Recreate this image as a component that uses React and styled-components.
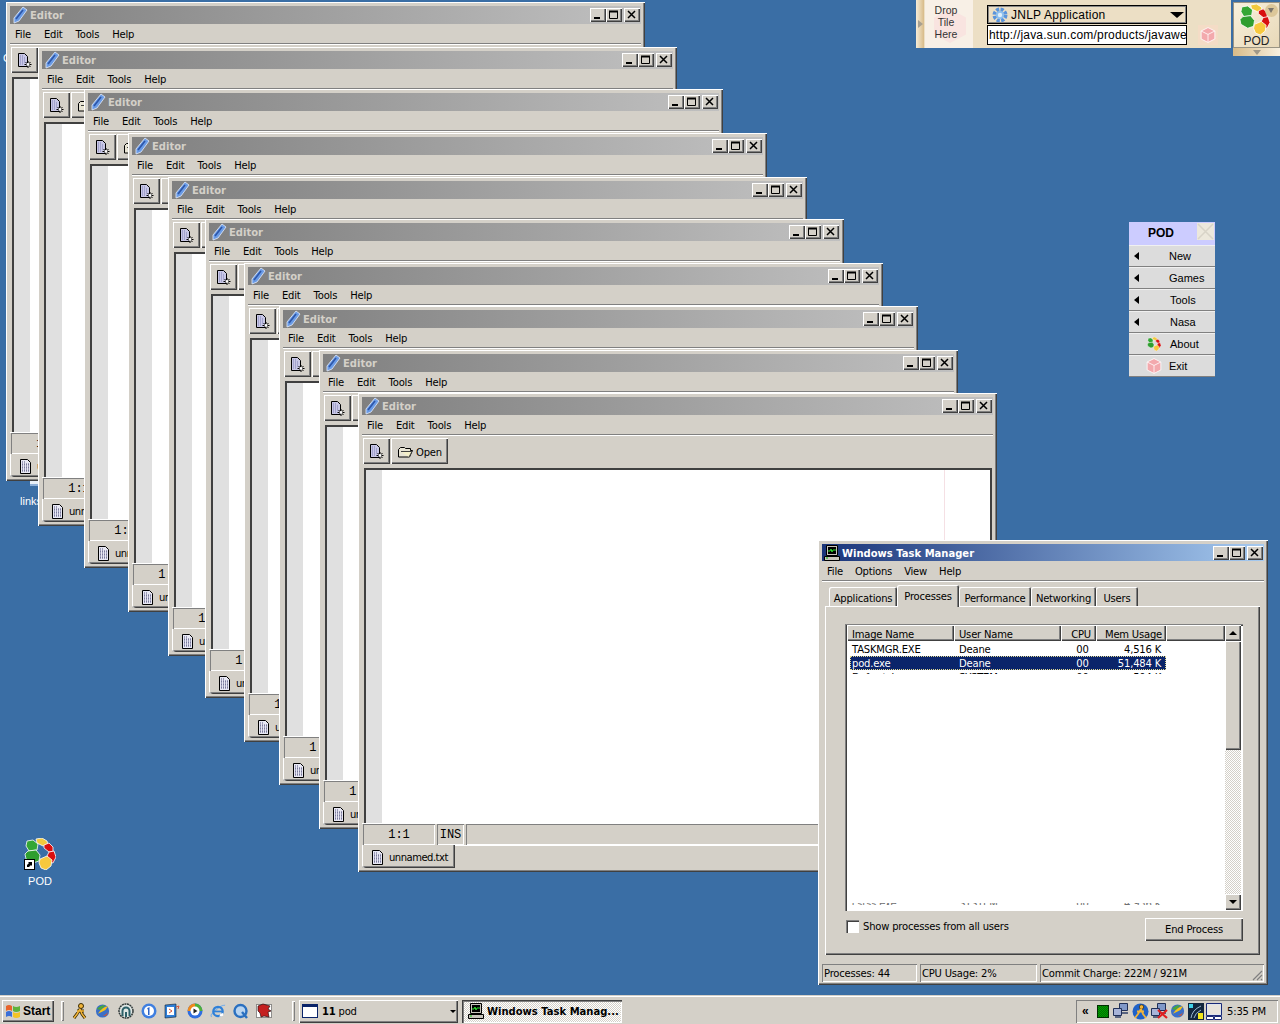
import styled, { createGlobalStyle } from "styled-components";

const GlobalStyle = createGlobalStyle`
  html, body {
    margin: 0;
    padding: 0;
    background: #3a6ea5;
  }
  * {
    box-sizing: border-box;
  }
`;

const UI_FONT = `"DejaVu Sans", sans-serif`;
const FACE = "#d4d0c8";

const raised = `box-shadow: inset 1px 1px 0 #fff, inset -1px -1px 0 #404040, inset -2px -2px 0 #808080;`;
const sunken = `box-shadow: inset 1px 1px 0 #808080, inset -1px -1px 0 #fff;`;

const EDITORS = [
  [6, 2], [38, 47], [84, 89], [128, 133], [168, 177],
  [205, 219], [244, 263], [279, 306], [319, 350], [358, 393],
];

const PROCESSES = [
  { name: "TASKMGR.EXE", user: "Deane", cpu: "00", mem: "4,516 K" },
  { name: "pod.exe", user: "Deane", cpu: "00", mem: "51,484 K", selected: true },
];

// icons

const PenIcon = () => (
  <svg width="16" height="18" viewBox="0 0 16 18">
    <path d="M11 1l4 3-8 11-5 2 0-5z" fill="#6a9be6" stroke="#e4ecfa" strokeWidth="0.8" />
    <path d="M4 13l7-9" stroke="#2c55a8" strokeWidth="1.600" />
  </svg>
);

const NewDocIcon = () => (
  <svg width="15" height="16" viewBox="0 0 15 16">
    <path d="M1.500.5h6l3 3v10h-9z" fill="#c9c8e6" stroke="#000" />
    <path d="M3 3h3M3 5h6M3 7h6M3 9h6M3 11h4" stroke="#7f7fb4" strokeDasharray="1 1" />
    <path d="M11 8v7M7.500 11.500h7M8.500 9l5 5M13.500 9l-5 5" stroke="#000" />
    <circle cx="11" cy="11.500" r="1.400" fill="#fff" />
  </svg>
);

const FolderIcon = () => (
  <svg width="15" height="12" viewBox="0 0 15 12">
    <path d="M.5 3.500l2-2h4l1 1h5v2h2l-3 6.500h-11z" fill="#e8e4d4" stroke="#000" />
    <path d="M3 5.500h11l-3 5.500" fill="#f4efc8" stroke="#404040" />
  </svg>
);

const DocIcon = () => (
  <svg width="13" height="15" viewBox="0 0 13 15">
    <path d="M1.500.5h7l3 3v11h-10z" fill="#e8e8f4" stroke="#000" />
    <path d="M3 3h4M3 5h7M3 6h7M3 8h7M3 9h7M3 11h7M3 12h7" stroke="#55557e" strokeDasharray="1 1" />
  </svg>
);

const MonitorIcon = () => (
  <svg width="16" height="16" viewBox="0 0 16 16">
    <path d="M2.500.5h11v10h-11z" fill="#c8c4bc" stroke="#000" />
    <path d="M4 2h8v7h-8z" fill="#000" />
    <path d="M4 6h2l1-2 1 3 1-2h3" stroke="#30e030" fill="none" />
    <path d="M.5 11.500h15v4h-15z" fill="#c8c4bc" stroke="#000" />
    <path d="M2 13h2" stroke="#00c000" />
  </svg>
);

const PodLogo = ({ size = 32 }) => (
  <svg width={size} height={size} viewBox="0 0 32 32">
    <g stroke="#fff" strokeWidth="0.8">
      <path d="M3 3l6-1 5 4-1 6-8 1-3-5z" fill="#34a634" />
      <path d="M4 13l8-1 4 5-1 6-6 2-7-4-1-5z" fill="#2f9e2f" />
      <path d="M12 1l6-1 5 3 1 4-5 1-6-3z" fill="#f2c93c" />
      <path d="M20 7l5-2 4 4 0 5-4 0-5-4z" fill="#d80f0f" />
      <path d="M25 14l5-1 2 6-3 6-4-1-2-6z" fill="#d80f0f" />
      <path d="M16 21l7-3 5 4-1 6-5 4-5-2-2-5z" fill="#f7c83e" />
    </g>
  </svg>
);

const Cube = ({ size = 16 }) => (
  <svg width={size} height={size} viewBox="0 0 14 14">
    <path d="M7 .5l6 3v7l-6 3-6-3v-7z" fill="#f3a9ad" stroke="#fff" strokeWidth="0.7" />
    <path d="M1 3.500l6 3 6-3M7 6.500v7" fill="none" stroke="#fff" strokeWidth="0.7" />
  </svg>
);

const Shortcut = () => (
  <svg width="11" height="11" viewBox="0 0 11 11">
    <path d="M0 0h11v11h-11z" fill="#000" />
    <path d="M1 1h9v9h-9z" fill="#fff" />
    <path d="M3 8l0-2 2-2-1-1h4v4l-1-1-2 2z" fill="#000" />
  </svg>
);

const WindowsFlag = () => (
  <svg width="16" height="15" viewBox="0 0 16 15">
    <path d="M1 2q3-2 6 0v5q-3-2-6 0z" fill="#e8632a" />
    <path d="M8 2q3 2 7 0v5q-4 2-7 0z" fill="#5fb33b" />
    <path d="M1 8q3-2 6 0v5q-3-2-6 0z" fill="#3a6fd8" />
    <path d="M8 8q3 2 7 0v5q-4 2-7 0z" fill="#f3c324" />
  </svg>
);

const Aim = () => (
  <svg width="16" height="17" viewBox="0 0 16 17">
    <circle cx="9" cy="3" r="2.500" fill="#f2b53a" stroke="#3a2a00" />
    <path d="M8 6l-3 5-3 4M8 6l2 5 3 4M5 8l7 0" fill="none" stroke="#3a2a00" strokeWidth="3" />
    <path d="M8 6l-3 5-3 4M8 6l2 5 3 4M5 8l7 0" fill="none" stroke="#f2b53a" strokeWidth="1.500" />
  </svg>
);

const OrbitGlobe = () => (
  <svg width="16" height="16" viewBox="0 0 17 16">
    <circle cx="8" cy="8" r="7" fill="#3a6fc8" />
    <path d="M3 11q5-8 11-8l-3 4q-4 2-8 4z" fill="#f4c21c" />
    <path d="M2 6q4-5 9-4l-5 5z" fill="#4aa83a" />
    <path d="M4 13q6 1 10-4l-2 4z" fill="#d8542a" />
  </svg>
);

const GearGlobe = () => (
  <svg width="16" height="16" viewBox="0 0 16 16">
    <circle cx="8" cy="8" r="5.500" fill="none" stroke="#5a94dc" strokeWidth="4" strokeDasharray="3 1.300" />
    <circle cx="8" cy="8" r="4" fill="#8ec0ee" />
    <circle cx="8" cy="8" r="2.200" fill="#dfeefa" />
  </svg>
);

const HeadsetRing = () => (
  <svg width="16" height="16" viewBox="0 0 16 16">
    <circle cx="8" cy="8" r="7" fill="#dfe6e4" stroke="#303838" strokeWidth="1.500" strokeDasharray="2 0.6" />
    <path d="M4.500 13v-5a3.500 3.500 0 0 1 7 0v5" fill="none" stroke="#2c6068" strokeWidth="2" />
    <path d="M7 9h2v5h-2z" fill="#2c6068" />
  </svg>
);

const OneBadge = () => (
  <svg width="16" height="16" viewBox="0 0 16 16">
    <circle cx="8" cy="8" r="7.500" fill="#3f7fe0" />
    <circle cx="8" cy="8" r="5" fill="#fff" />
    <path d="M6.500 5l2-1v8h-1.500v-6l-1 .5z" fill="#2a62c8" />
  </svg>
);

const OutlookBox = () => (
  <svg width="16" height="16" viewBox="0 0 16 16">
    <path d="M1 2l11-1v13l-11 1z" fill="#2f7fd8" stroke="#123" strokeWidth="0.6" />
    <path d="M3 4h7v8h-7z" fill="#fff" />
    <path d="M5 6l3 2-3 2M12 4l3-1-1 3" fill="none" stroke="#d4543a" />
  </svg>
);

const MediaPlayer = () => (
  <svg width="16" height="16" viewBox="0 0 16 16">
    <circle cx="8" cy="8" r="7.500" fill="#2f6ee0" />
    <path d="M8 .5a7.500 7.500 0 0 1 7.500 7.500h-7.500z" fill="#4fb038" />
    <path d="M.5 8a7.500 7.500 0 0 1 7.500-7.500v7.500z" fill="#f08a1c" />
    <circle cx="8" cy="8" r="4.500" fill="#fff" />
    <path d="M6.500 5.500l4 2.500-4 2.500z" fill="#222" />
  </svg>
);

const IeIcon = () => (
  <svg width="16" height="16" viewBox="0 0 17 16">
    <path d="M2 14q-3-1 4-7t10-5" fill="none" stroke="#7ab0e8" strokeWidth="1.200" />
    <circle cx="8.500" cy="8.500" r="5" fill="none" stroke="#2f80d8" strokeWidth="2.400" />
    <path d="M4 8.500h9" stroke="#2f80d8" strokeWidth="1.800" />
    <path d="M11 11l3-1 0 3-4 1z" fill="#fff" />
  </svg>
);

const QuickTime = () => (
  <svg width="16" height="16" viewBox="0 0 16 16">
    <circle cx="7.500" cy="8" r="6" fill="#b8d4f0" stroke="#2a70c0" strokeWidth="2.400" />
    <path d="M9 9l5 6" stroke="#2a70c0" strokeWidth="2.400" />
  </svg>
);

const DragonBox = () => (
  <svg width="16" height="16" viewBox="0 0 16 16">
    <path d="M.5 1.500h15v13h-15z" fill="#fff" stroke="#333" strokeDasharray="1 1" />
    <path d="M2 3l5-2 7 2-2 3 3 2-3 1 1 5-5-1-3 1-1-4-2-2z" fill="#c42020" stroke="#301010" strokeWidth="0.7" />
  </svg>
);

const NetPair = ({ cross }) => (
  <svg width="17" height="16" viewBox="0 0 17 16">
    <path d="M6.500.5h8v7h-8z" fill="#8098c8" stroke="#203058" />
    <path d="M.5 5.500h8v7h-8z" fill="#a8b4d8" stroke="#203058" />
    <path d="M2 14h6M9 10h6" stroke="#304068" strokeWidth="1.500" />
    {cross && <path d="M7 7l9 8M16 7l-9 8" stroke="#e02020" strokeWidth="2.200" />}
  </svg>
);

const AimBadge = () => (
  <svg width="17" height="17" viewBox="0 0 17 17">
    <circle cx="8.500" cy="8.500" r="8" fill="#1f62c8" />
    <circle cx="9.500" cy="4" r="2.200" fill="#f2b53a" stroke="#221a00" strokeWidth="0.600" />
    <path d="M9 6l-3 5-3 4M9 6l2 5 3 4M5 8.500l7 0" fill="none" stroke="#f2b53a" strokeWidth="1.800" />
  </svg>
);

const SignalBox = () => (
  <svg width="16" height="17" viewBox="0 0 16 17">
    <path d="M0 0h16v17h-16z" fill="#12263e" />
    <path d="M1 1h4v4h-4z" fill="#40d0e8" />
    <path d="M3 15q1-8 10-12M6 15q1-5 7-8" fill="none" stroke="#9ab8d0" />
    <path d="M10 10h5v6h-5z" fill="#f2e61c" />
  </svg>
);

const LaptopBox = () => (
  <svg width="16" height="17" viewBox="0 0 16 17">
    <path d="M.5.5h15v12h-15z" fill="#dfe4ec" stroke="#1a2a78" />
    <path d="M2 2h12v9h-12z" fill="#e8e4dc" />
    <path d="M.5 13.500h7v3h-7zM8.500 13.500h7v3h-7z" fill="#fff" stroke="#1a2a78" />
  </svg>
);

// page structure

const Screen = styled.div`
  width: 1280px;
  height: 1024px;
  display: flex;
  flex-direction: column;
  overflow: hidden;
  background: #3a6ea5;
  font-family: ${UI_FONT};
  font-size: 10px;
  letter-spacing: -0.2px;
  color: #000;
`;

const Workspace = styled.div`
  position: relative;
  flex: 1;
  overflow: hidden;
`;

const DesktopIcon = styled.div`
  position: absolute;
  left: ${(p) => p.$x}px;
  top: ${(p) => p.$y}px;
  width: 60px;
  display: flex;
  flex-direction: column;
  align-items: center;
  gap: 5px;
  color: #fff;
  font-size: 11px;
  letter-spacing: 0;
  font-family: "Liberation Sans", sans-serif;
`;

const IconStack = styled.div`
  position: relative;
  height: 32px;
`;

const ShortcutBadge = styled.div`
  position: absolute;
  left: 0;
  bottom: 0;
  line-height: 0;
`;

const HiddenLabel = styled.div`
  position: absolute;
  left: ${(p) => p.$x}px;
  top: ${(p) => p.$y}px;
  color: #fff;
  font-size: 11px;
  letter-spacing: 0;
  font-family: "Liberation Sans", sans-serif;
`;

const HiddenIconEdge = styled.div`
  position: absolute;
  left: 30px;
  top: 481px;
  width: 8px;
  height: 5px;
  background: #e8f0f8;
  border-bottom: 2px solid #8eb0d8;
`;

// editor window

const EditorFrame = styled.div`
  position: absolute;
  left: ${(p) => p.$x}px;
  top: ${(p) => p.$y}px;
  width: 639px;
  height: 479px;
  padding: 4px 4px 3px;
  display: flex;
  flex-direction: column;
  background: ${FACE};
  ${raised}
`;

const TitleBar = styled.div`
  height: 18px;
  flex: none;
  display: flex;
  align-items: center;
  padding: 0 1px 0 2px;
  gap: 2px;
  background: linear-gradient(90deg, #808080, #c0c0c0);
  color: ${FACE};
  font-weight: bold;
  letter-spacing: 0;
  line-height: 0;
`;

const TitleText = styled.span`
  flex: 1;
  padding-top: 2px;
  line-height: 14px;
`;

const CaptionButtons = styled.div`
  display: flex;
  align-items: center;
`;

const CaptionButton = styled.div`
  position: relative;
  width: 16px;
  height: 14px;
  margin-left: ${(p) => (p.$close ? 2 : 0)}px;
  background: ${FACE};
  ${raised}
  svg {
    position: absolute;
    left: 3px;
    top: 2px;
  }
`;

const CaptionGlyph = ({ kind }) => (
  <svg width="9" height="9" viewBox="0 0 9 9">
    {kind === "min" && <path d="M1 7h6v2h-6z" fill="#000" />}
    {kind === "max" && <path d="M.5 1.500h8v7h-8zM0 1h9v1h-9z" fill="none" stroke="#000" />}
    {kind === "close" && <path d="M1 1l7 7M8 1l-7 7" stroke="#000" strokeWidth="1.500" />}
  </svg>
);

const MenuBar = styled.div`
  height: 19px;
  flex: none;
  display: flex;
  align-items: center;
  padding: 2px 0 0 1px;
`;

const MenuItem = styled.span`
  padding: 0 6px 0 4px;
  margin-right: ${(p) => p.$gap ?? 3}px;
`;

const Groove = styled.div`
  height: 2px;
  flex: none;
  border-top: 1px solid #808080;
  border-bottom: 1px solid #fff;
`;

const Toolbar = styled.div`
  height: 32px;
  flex: none;
  display: flex;
  align-items: flex-start;
  padding: 2px 1px 0;
  gap: 1px;
`;

const ToolButton = styled.div`
  height: 26px;
  padding: 2px 6px 0 ${(p) => (p.$label ? 7 : 6)}px;
  display: flex;
  align-items: center;
  gap: 3px;
  background: ${FACE};
  ${raised}
`;

const EditorPane = styled.div`
  flex: 1;
  margin: 0 1px 0 2px;
  display: flex;
  border-top: 2px solid #404040;
  border-left: 2px solid #404040;
  border-right: 2px solid #404040;
  background: #fff;
  position: relative;
`;

const Gutter = styled.div`
  width: 16px;
  background: #e0e0e0;
`;

const MarginLine = styled.div`
  position: absolute;
  left: 578px;
  top: 0;
  bottom: 0;
  width: 1px;
  background: #f5e0e4;
`;

const CaretRow = styled.div`
  height: 22px;
  flex: none;
  display: flex;
  gap: 2px;
  padding-left: 1px;
  border-top: 1px solid #fff;
`;

const CaretCell = styled.div`
  display: flex;
  align-items: center;
  justify-content: center;
  width: ${(p) => (p.$width ? `${p.$width}px` : "auto")};
  flex: ${(p) => (p.$width ? "none" : "1")};
  font-family: "Liberation Mono", monospace;
  font-size: 12px;
  letter-spacing: 0;
  ${sunken}
`;

const TabRow = styled.div`
  flex: none;
  height: 24px;
  display: flex;
  align-items: flex-start;
`;

const FileTab = styled.div`
  height: 23px;
  width: 93px;
  padding: 2px 0 0 9px;
  display: flex;
  align-items: center;
  gap: 5px;
  letter-spacing: -0.5px;
  white-space: nowrap;
  background: ${FACE};
  border-radius: 0 0 0 3px;
  box-shadow: inset 1px 0 0 #fff, inset -1px -1px 0 #404040, inset -2px -2px 0 #808080;
`;

const TabFiller = styled.div`
  flex: 1;
  border-top: 1px solid #fff;
`;

const EditorWindow = ({ x, y }) => (
  <EditorFrame $x={x} $y={y}>
    <TitleBar>
      <PenIcon />
      <TitleText>Editor</TitleText>
      <CaptionButtons>
        <CaptionButton><CaptionGlyph kind="min" /></CaptionButton>
        <CaptionButton><CaptionGlyph kind="max" /></CaptionButton>
        <CaptionButton $close><CaptionGlyph kind="close" /></CaptionButton>
      </CaptionButtons>
    </TitleBar>
    <MenuBar>
      <MenuItem>File</MenuItem>
      <MenuItem>Edit</MenuItem>
      <MenuItem>Tools</MenuItem>
      <MenuItem>Help</MenuItem>
    </MenuBar>
    <Groove />
    <Toolbar>
      <ToolButton><NewDocIcon /></ToolButton>
      <ToolButton $label><FolderIcon />Open</ToolButton>
    </Toolbar>
    <EditorPane>
      <Gutter />
      <MarginLine />
    </EditorPane>
    <CaretRow>
      <CaretCell $width={72}>1:1</CaretCell>
      <CaretCell $width={27}>INS</CaretCell>
      <CaretCell />
    </CaretRow>
    <TabRow>
      <FileTab><DocIcon />unnamed.txt</FileTab>
      <TabFiller />
    </TabRow>
  </EditorFrame>
);

// task manager

const TaskFrame = styled.div`
  position: absolute;
  left: 818px;
  top: 540px;
  width: 450px;
  height: 445px;
  padding: 4px 4px 3px;
  display: flex;
  flex-direction: column;
  background: ${FACE};
  ${raised}
`;

const ActiveTitle = styled(TitleBar)`
  height: 17px;
  background: linear-gradient(90deg, #1a357a, #a6caf0);
  color: #fff;
`;

const TaskTabs = styled.div`
  display: flex;
  align-items: flex-end;
  height: 21px;
  flex: none;
  padding-left: 7px;
  margin-top: 3px;
`;

const TaskTab = styled.div`
  height: ${(p) => (p.$active ? 22 : 19)}px;
  width: ${(p) => p.$width}px;
  flex: none;
  display: flex;
  align-items: center;
  justify-content: center;
  padding-top: ${(p) => (p.$active ? 1 : 3)}px;
  padding-bottom: ${(p) => (p.$active ? 1 : 0)}px;
  margin-bottom: ${(p) => (p.$active ? -1 : 0)}px;
  background: ${FACE};
  position: relative;
  z-index: ${(p) => (p.$active ? 2 : 1)};
  border-radius: 2px 2px 0 0;
  box-shadow: inset 1px 1px 0 #fff, inset -1px 0 0 #404040, inset -2px 0 0 #808080;
`;

const TaskPanel = styled.div`
  margin: 0 4px 0 3px;
  height: 349px;
  flex: none;
  padding: 18px 17px 0 20px;
  display: flex;
  flex-direction: column;
  ${raised}
`;

const ProcessList = styled.div`
  height: 287px;
  padding: 1px;
  flex: none;
  display: flex;
  background: #fff;
  box-shadow: inset 1px 1px 0 #808080, inset 2px 2px 0 #404040, inset -1px -1px 0 #fff;
`;

const ListBody = styled.div`
  flex: 1;
  padding-left: 1px;
  display: flex;
  flex-direction: column;
  min-width: 0;
`;

const ListHead = styled.div`
  display: grid;
  grid-template-columns: 107px 107px 35px 70px 1fr;
  height: 16px;
  flex: none;
`;

const HeadCell = styled.div`
  display: flex;
  align-items: center;
  padding: 2px 0 0 5px;
  justify-content: ${(p) => (p.$center ? "center" : "flex-start")};
  background: ${FACE};
  ${raised}
`;

const Rows = styled.div`
  flex: 1;
  padding-top: 1px;
  position: relative;
  overflow: hidden;
`;

const Row = styled.div`
  display: grid;
  grid-template-columns: 107px 107px 35px 67px;
  width: 316px;
  margin-left: 3px;
  height: 14px;
  padding-top: 1px;
  line-height: 14px;
  overflow: hidden;
  color: ${(p) => (p.$selected ? "#fff" : "#000")};
  background: ${(p) => (p.$selected ? "#0a246a" : "transparent")};
  outline: ${(p) => (p.$selected ? "1px dotted #e0d890" : "none")};
  outline-offset: -1px;
`;

const SliverRow = styled(Row)`
  height: 4px;
  ${(p) => p.$bottom && `
    position: absolute;
    left: 0;
    bottom: 5px;
    height: 2px;
    padding-top: 0;
    line-height: 2px;
    color: #707070;
  `}
`;

const Cell = styled.span`
  padding-left: ${(p) => (p.$right ? 0 : 2)}px;
  padding-right: ${(p) => p.$pad ?? 0}px;
  text-align: ${(p) => (p.$right ? "right" : p.$center ? "center" : "left")};
  white-space: nowrap;
`;

const ScrollBar = styled.div`
  width: 16px;
  flex: none;
  margin: 0 1px 0 0;
  display: flex;
  flex-direction: column;
  background: repeating-conic-gradient(#fff 0 25%, ${FACE} 0 50%) 0 0 / 2px 2px;
`;

const ScrollButton = styled.div`
  height: 16px;
  flex: none;
  display: flex;
  align-items: center;
  justify-content: center;
  background: ${FACE};
  ${raised}
`;

const ScrollThumb = styled.div`
  height: 109px;
  flex: none;
  background: ${FACE};
  ${raised}
`;

const ScrollGap = styled.div`
  flex: 1;
`;

const Arrow = styled.div`
  width: 0;
  height: 0;
  border-left: 4px solid transparent;
  border-right: 4px solid transparent;
  ${(p) => (p.$up ? "border-bottom: 4px solid #000;" : "border-top: 4px solid #000;")}
`;

const PanelFooter = styled.div`
  display: flex;
  justify-content: space-between;
  align-items: flex-start;
  margin-top: 7px;
  padding-left: 1px;
`;

const CheckLabel = styled.label`
  display: flex;
  align-items: center;
  gap: 4px;
  height: 16px;
`;

const CheckBox = styled.span`
  width: 13px;
  height: 13px;
  background: #fff;
  box-shadow: inset 1px 1px 0 #808080, inset 2px 2px 0 #404040, inset -1px -1px 0 #fff;
`;

const EndButton = styled.div`
  width: 98px;
  height: 23px;
  display: flex;
  align-items: center;
  justify-content: center;
  background: ${FACE};
  ${raised}
`;

const TaskStatus = styled.div`
  display: flex;
  flex: none;
  gap: 3px;
  height: 18px;
  margin-top: 9px;
`;

const StatusCell = styled.div`
  width: ${(p) => (p.$width ? `${p.$width}px` : "auto")};
  flex: ${(p) => (p.$width ? "none" : "1")};
  display: flex;
  align-items: center;
  padding-left: 2px;
  position: relative;
  ${sunken}
`;

const GripLines = styled.svg`
  position: absolute;
  right: 1px;
  bottom: 1px;
`;

// pod side menu and dock

const PodMenu = styled.div`
  position: absolute;
  left: 1129px;
  top: 222px;
  width: 86px;
  display: flex;
  flex-direction: column;
  font-family: "Liberation Sans", sans-serif;
  font-size: 11px;
  letter-spacing: 0;
`;

const PodHeader = styled.div`
  position: relative;
  height: 23px;
  display: flex;
  align-items: center;
  justify-content: center;
  padding: 0 22px 2px 0;
  background: #ccccff;
  font-weight: bold;
  font-size: 12px;
`;

const PodClose = styled.div`
  position: absolute;
  right: 1px;
  top: 1px;
  width: 17px;
  height: 17px;
  display: flex;
  background: #ece8dc;
`;

const PodItem = styled.div`
  position: relative;
  height: 22px;
  display: flex;
  align-items: center;
  padding-left: ${(p) => p.$indent}px;
  background: #dcdcdc;
  border-top: 1px solid #f0f0f0;
  border-bottom: 1px solid #808080;
`;

const PodIcon = styled.span`
  position: absolute;
  left: ${(p) => p.$x}px;
  top: ${(p) => p.$y}px;
  line-height: 0;
`;

const PodArrow = styled.span`
  position: absolute;
  left: 5px;
  top: 6px;
  width: 0;
  height: 0;
  border-top: 4px solid transparent;
  border-bottom: 4px solid transparent;
  border-right: 5px solid #000;
`;

const Dock = styled.div`
  position: absolute;
  left: 916px;
  top: 0;
  width: 315px;
  height: 48px;
  display: flex;
  background: #ecdfc5;
  font-family: "Liberation Sans", sans-serif;
  font-size: 12px;
  letter-spacing: 0;
`;

const DockHandle = styled.div`
  width: 8px;
  display: flex;
  align-items: center;
  justify-content: center;
  background: linear-gradient(90deg, #f6ecd8, #d8bb88);
  &::before {
    content: "";
    border-top: 4px solid transparent;
    border-bottom: 4px solid transparent;
    border-left: 5px solid #a8a090;
  }
`;

const DropTile = styled.div`
  position: relative;
  width: 48px;
  margin-left: 1px;
  padding: 4px 6px 0 0;
  background: #f8f0e6;
  text-align: center;
  font-size: 10.5px;
  line-height: 12px;
  color: #333;
`;

const DropCube = styled.div`
  position: absolute;
  left: 9px;
  top: 9px;
  width: 32px;
  height: 34px;
  background: #f9e4e0;
  clip-path: polygon(50% 0, 100% 25%, 100% 75%, 50% 100%, 0 75%, 0 25%);
`;

const DropText = styled.div`
  position: relative;
`;

const DockFields = styled.div`
  margin: 5px 0 0 14px;
  width: 200px;
  display: flex;
  flex-direction: column;
  gap: 1px;
`;

const DockSelect = styled.div`
  height: 19px;
  display: flex;
  align-items: center;
  gap: 3px;
  padding: 0 2px 0 4px;
  letter-spacing: 0.25px;
  border: 1px solid #000;
  outline: 1px solid #888;
  outline-offset: -2px;
`;

const DockSelectText = styled.span`
  flex: 1;
`;

const DockArrow = styled.span`
  width: 0;
  height: 0;
  border-left: 7px solid transparent;
  border-right: 7px solid transparent;
  border-top: 6px solid #000;
`;

const DockInput = styled.div`
  height: 20px;
  padding: 0 1px;
  line-height: 18px;
  letter-spacing: 0.2px;
  overflow: hidden;
  white-space: nowrap;
  background: #fff;
  border: 1px solid #000;
`;

const DockCube = styled.div`
  width: 20px;
  height: 20px;
  margin: 25px 0 0 11px;
  display: flex;
  align-items: center;
  justify-content: center;
  background: #f4dcc6;
  line-height: 0;
`;

const PodTile = styled.div`
  position: absolute;
  left: 1233px;
  top: 2px;
  width: 47px;
  height: 46px;
  display: flex;
  flex-direction: column;
  align-items: center;
  padding-top: 1px;
  background: linear-gradient(135deg, #f8f0dc, #e8d8b8);
  border: 1px solid #9a9484;
  font-family: "Liberation Sans", sans-serif;
  font-size: 12px;
  letter-spacing: 0;
  line-height: 12px;
  color: #222;
`;

const PodTileLogo = styled.div`
  height: 31px;
  margin-right: 5px;
  line-height: 0;
`;

const PodTileMenu = styled.span`
  position: absolute;
  right: 1px;
  top: 1px;
  width: 13px;
  height: 13px;
  border-radius: 50%;
  background: #dcc79a;
  &::before {
    content: "";
    position: absolute;
    left: 3px;
    top: 4px;
    border-left: 3.500px solid transparent;
    border-right: 3.500px solid transparent;
    border-top: 5px solid #7c766c;
  }
`;

const PodTileFoot = styled.div`
  position: absolute;
  left: 1233px;
  top: 48px;
  width: 47px;
  height: 8px;
  display: flex;
  align-items: center;
  justify-content: center;
  background: linear-gradient(90deg, #d8bb88, #f8f0e0);
  &::before {
    content: "";
    border-left: 4px solid transparent;
    border-right: 4px solid transparent;
    border-top: 5px solid #a09888;
  }
`;

// taskbar

const Taskbar = styled.div`
  height: 29px;
  flex: none;
  display: flex;
  align-items: center;
  padding: 2px 2px 0;
  background: ${FACE};
  border-top: 1px solid ${FACE};
  box-shadow: inset 0 1px 0 #fff;
`;

const StartButton = styled.div`
  width: 52px;
  height: 22px;
  flex: none;
  display: flex;
  align-items: center;
  gap: 2px;
  padding-left: 3px;
  font-family: "Liberation Sans", sans-serif;
  font-weight: bold;
  font-size: 12px;
  letter-spacing: 0;
  background: ${FACE};
  ${raised}
`;

const BarDivider = styled.div`
  width: 3px;
  height: 20px;
  flex: none;
  margin: ${(p) => p.$margin};
  background: ${FACE};
  box-shadow: inset 1px 1px 0 #fff, inset -1px -1px 0 #808080;
`;

const QuickLaunch = styled.div`
  display: grid;
  grid-template-columns: repeat(9, 23px);
  justify-items: center;
  align-items: center;
  flex: none;
  line-height: 0;
`;

const TaskButton = styled.div`
  height: 23px;
  width: ${(p) => p.$width}px;
  flex: none;
  margin-right: 4px;
  display: flex;
  align-items: center;
  gap: ${(p) => (p.$pressed ? 3 : 4)}px;
  padding-left: ${(p) => (p.$pressed ? 6 : 3)}px;
  position: relative;
  white-space: nowrap;
  ${(p) => (p.$pressed
    ? `background: repeating-conic-gradient(#fff 0 25%, ${FACE} 0 50%) 0 0 / 2px 2px;
       box-shadow: inset 1px 1px 0 #404040, inset 2px 2px 0 #808080, inset -1px -1px 0 #fff;
       font-weight: bold;
       letter-spacing: 0;`
    : `background: ${FACE}; ${raised}`)}
`;

const WinGlyph = styled.span`
  width: 16px;
  height: 14px;
  background: #fff;
  border: 1px solid #0a246a;
  border-top-width: 3px;
`;

const GroupArrow = styled.span`
  position: absolute;
  right: 2px;
  top: 10px;
  border-left: 3px solid transparent;
  border-right: 3px solid transparent;
  border-top: 3px solid #000;
`;

const Tray = styled.div`
  margin-left: auto;
  width: 202px;
  height: 23px;
  flex: none;
  display: flex;
  align-items: center;
  padding-left: 6px;
  line-height: 0;
  ${sunken}
`;

const TrayChevron = styled.span`
  width: 13px;
  line-height: 12px;
  font-weight: bold;
  font-size: 12px;
  font-family: "Liberation Sans", sans-serif;
`;

const TrayIcons = styled.div`
  display: flex;
  align-items: center;
  gap: 2px;
`;

const Clock = styled.span`
  margin-left: auto;
  padding: 2px 12px 0 0;
  line-height: 12px;
  white-space: nowrap;
`;

const LedGrid = styled.span`
  width: 12px;
  height: 13px;
  margin: 0 2px;
  background: repeating-conic-gradient(#007000 0 25%, #00a000 0 50%) 0 0 / 2px 2px;
  border: 1px solid #003000;
`;

const PodMenuEntries = [
  { label: "New", indent: 40 },
  { label: "Games", indent: 40 },
  { label: "Tools", indent: 41 },
  { label: "Nasa", indent: 41 },
];

const App = () => (
  <>
    <GlobalStyle />
    <Screen>
      <Workspace>
        <HiddenLabel $x={3} $y={52}>C</HiddenLabel>
        <HiddenIconEdge />
        <HiddenLabel $x={20} $y={495}>links</HiddenLabel>
        <DesktopIcon $x={10} $y={838}>
          <IconStack>
            <PodLogo />
            <ShortcutBadge><Shortcut /></ShortcutBadge>
          </IconStack>
          POD
        </DesktopIcon>

        {EDITORS.map(([x, y]) => (
          <EditorWindow key={x} x={x} y={y} />
        ))}

        <TaskFrame>
          <ActiveTitle>
            <MonitorIcon />
            <TitleText>Windows Task Manager</TitleText>
            <CaptionButtons>
              <CaptionButton><CaptionGlyph kind="min" /></CaptionButton>
              <CaptionButton><CaptionGlyph kind="max" /></CaptionButton>
              <CaptionButton $close><CaptionGlyph kind="close" /></CaptionButton>
            </CaptionButtons>
          </ActiveTitle>
          <MenuBar>
            <MenuItem $gap={2}>File</MenuItem>
            <MenuItem $gap={2}>Options</MenuItem>
            <MenuItem $gap={2}>View</MenuItem>
            <MenuItem $gap={2}>Help</MenuItem>
          </MenuBar>
          <Groove />
          <TaskTabs>
            <TaskTab $width={68}>Applications</TaskTab>
            <TaskTab $width={62} $active>Processes</TaskTab>
            <TaskTab $width={72}>Performance</TaskTab>
            <TaskTab $width={65}>Networking</TaskTab>
            <TaskTab $width={42}>Users</TaskTab>
          </TaskTabs>
          <TaskPanel>
            <ProcessList>
              <ListBody>
                <ListHead>
                  <HeadCell>Image Name</HeadCell>
                  <HeadCell>User Name</HeadCell>
                  <HeadCell $center>CPU</HeadCell>
                  <HeadCell $center>Mem Usage</HeadCell>
                  <HeadCell />
                </ListHead>
                <Rows>
                  {PROCESSES.map((p) => (
                    <Row key={p.name} $selected={p.selected}>
                      <Cell>{p.name}</Cell>
                      <Cell>{p.user}</Cell>
                      <Cell $center>{p.cpu}</Cell>
                      <Cell $right $pad={5}>{p.mem}</Cell>
                    </Row>
                  ))}
                  <SliverRow>
                    <Cell>Defwatch.exe</Cell>
                    <Cell>SYSTEM</Cell>
                    <Cell $center>00</Cell>
                    <Cell $right $pad={5}>504 K</Cell>
                  </SliverRow>
                  <SliverRow $bottom>
                    <Cell>csrss.exe</Cell>
                    <Cell>SYSTEM</Cell>
                    <Cell $center>00</Cell>
                    <Cell $right $pad={5}>4,936 K</Cell>
                  </SliverRow>
                </Rows>
              </ListBody>
              <ScrollBar>
                <ScrollButton><Arrow $up /></ScrollButton>
                <ScrollThumb />
                <ScrollGap />
                <ScrollButton><Arrow /></ScrollButton>
              </ScrollBar>
            </ProcessList>
            <PanelFooter>
              <CheckLabel><CheckBox />Show processes from all users</CheckLabel>
              <EndButton>End Process</EndButton>
            </PanelFooter>
          </TaskPanel>
          <TaskStatus>
            <StatusCell $width={95}>Processes: 44</StatusCell>
            <StatusCell $width={117}>CPU Usage: 2%</StatusCell>
            <StatusCell>
              Commit Charge: 222M / 921M
              <GripLines width="12" height="12" viewBox="0 0 12 12">
                <path d="M11 2l-9 9M11 6l-5 5M11 10l-1 1" stroke="#808080" strokeWidth="1.200" />
              </GripLines>
            </StatusCell>
          </TaskStatus>
        </TaskFrame>

        <PodMenu>
          <PodHeader>
            POD
            <PodClose>
              <svg width="17" height="17" viewBox="0 0 17 17">
                <path d="M1 1l15 15M16 1l-15 15" stroke="#d8d4c8" strokeWidth="1.500" />
              </svg>
            </PodClose>
          </PodHeader>
          {PodMenuEntries.map(({ label, indent }) => (
            <PodItem key={label} $indent={indent}>
              <PodArrow />
              {label}
            </PodItem>
          ))}
          <PodItem $indent={41}>
            <PodIcon $x={18} $y={3}><PodLogo size={14} /></PodIcon>
            About
          </PodItem>
          <PodItem $indent={40}>
            <PodIcon $x={17} $y={2}><Cube /></PodIcon>
            Exit
          </PodItem>
        </PodMenu>

        <Dock>
          <DockHandle />
          <DropTile>
            <DropCube />
            <DropText>Drop<br />Tile<br />Here</DropText>
          </DropTile>
          <DockFields>
            <DockSelect>
              <GearGlobe />
              <DockSelectText>JNLP Application</DockSelectText>
              <DockArrow />
            </DockSelect>
            <DockInput>http://java.sun.com/products/javawebstart</DockInput>
          </DockFields>
          <DockCube><Cube /></DockCube>
        </Dock>
        <PodTile>
          <PodTileLogo><PodLogo size={31} /></PodTileLogo>
          POD
          <PodTileMenu />
        </PodTile>
        <PodTileFoot />
      </Workspace>

      <Taskbar>
        <StartButton><WindowsFlag />Start</StartButton>
        <BarDivider $margin="0 4px 0 7px" />
        <QuickLaunch>
          <Aim />
          <OrbitGlobe />
          <HeadsetRing />
          <OneBadge />
          <OutlookBox />
          <MediaPlayer />
          <IeIcon />
          <QuickTime />
          <DragonBox />
        </QuickLaunch>
        <BarDivider $margin="0 4px 0 17px" />
        <TaskButton $width={159}>
          <WinGlyph />
          <span><b>11</b> pod</span>
          <GroupArrow />
        </TaskButton>
        <TaskButton $width={160} $pressed>
          <MonitorIcon />
          Windows Task Manag...
        </TaskButton>
        <Tray>
          <TrayChevron>«</TrayChevron>
          <TrayIcons>
            <LedGrid />
            <NetPair />
            <AimBadge />
            <NetPair cross />
            <OrbitGlobe />
            <SignalBox />
            <LaptopBox />
          </TrayIcons>
          <Clock>5:35 PM</Clock>
        </Tray>
      </Taskbar>
    </Screen>
  </>
);

export default App;
